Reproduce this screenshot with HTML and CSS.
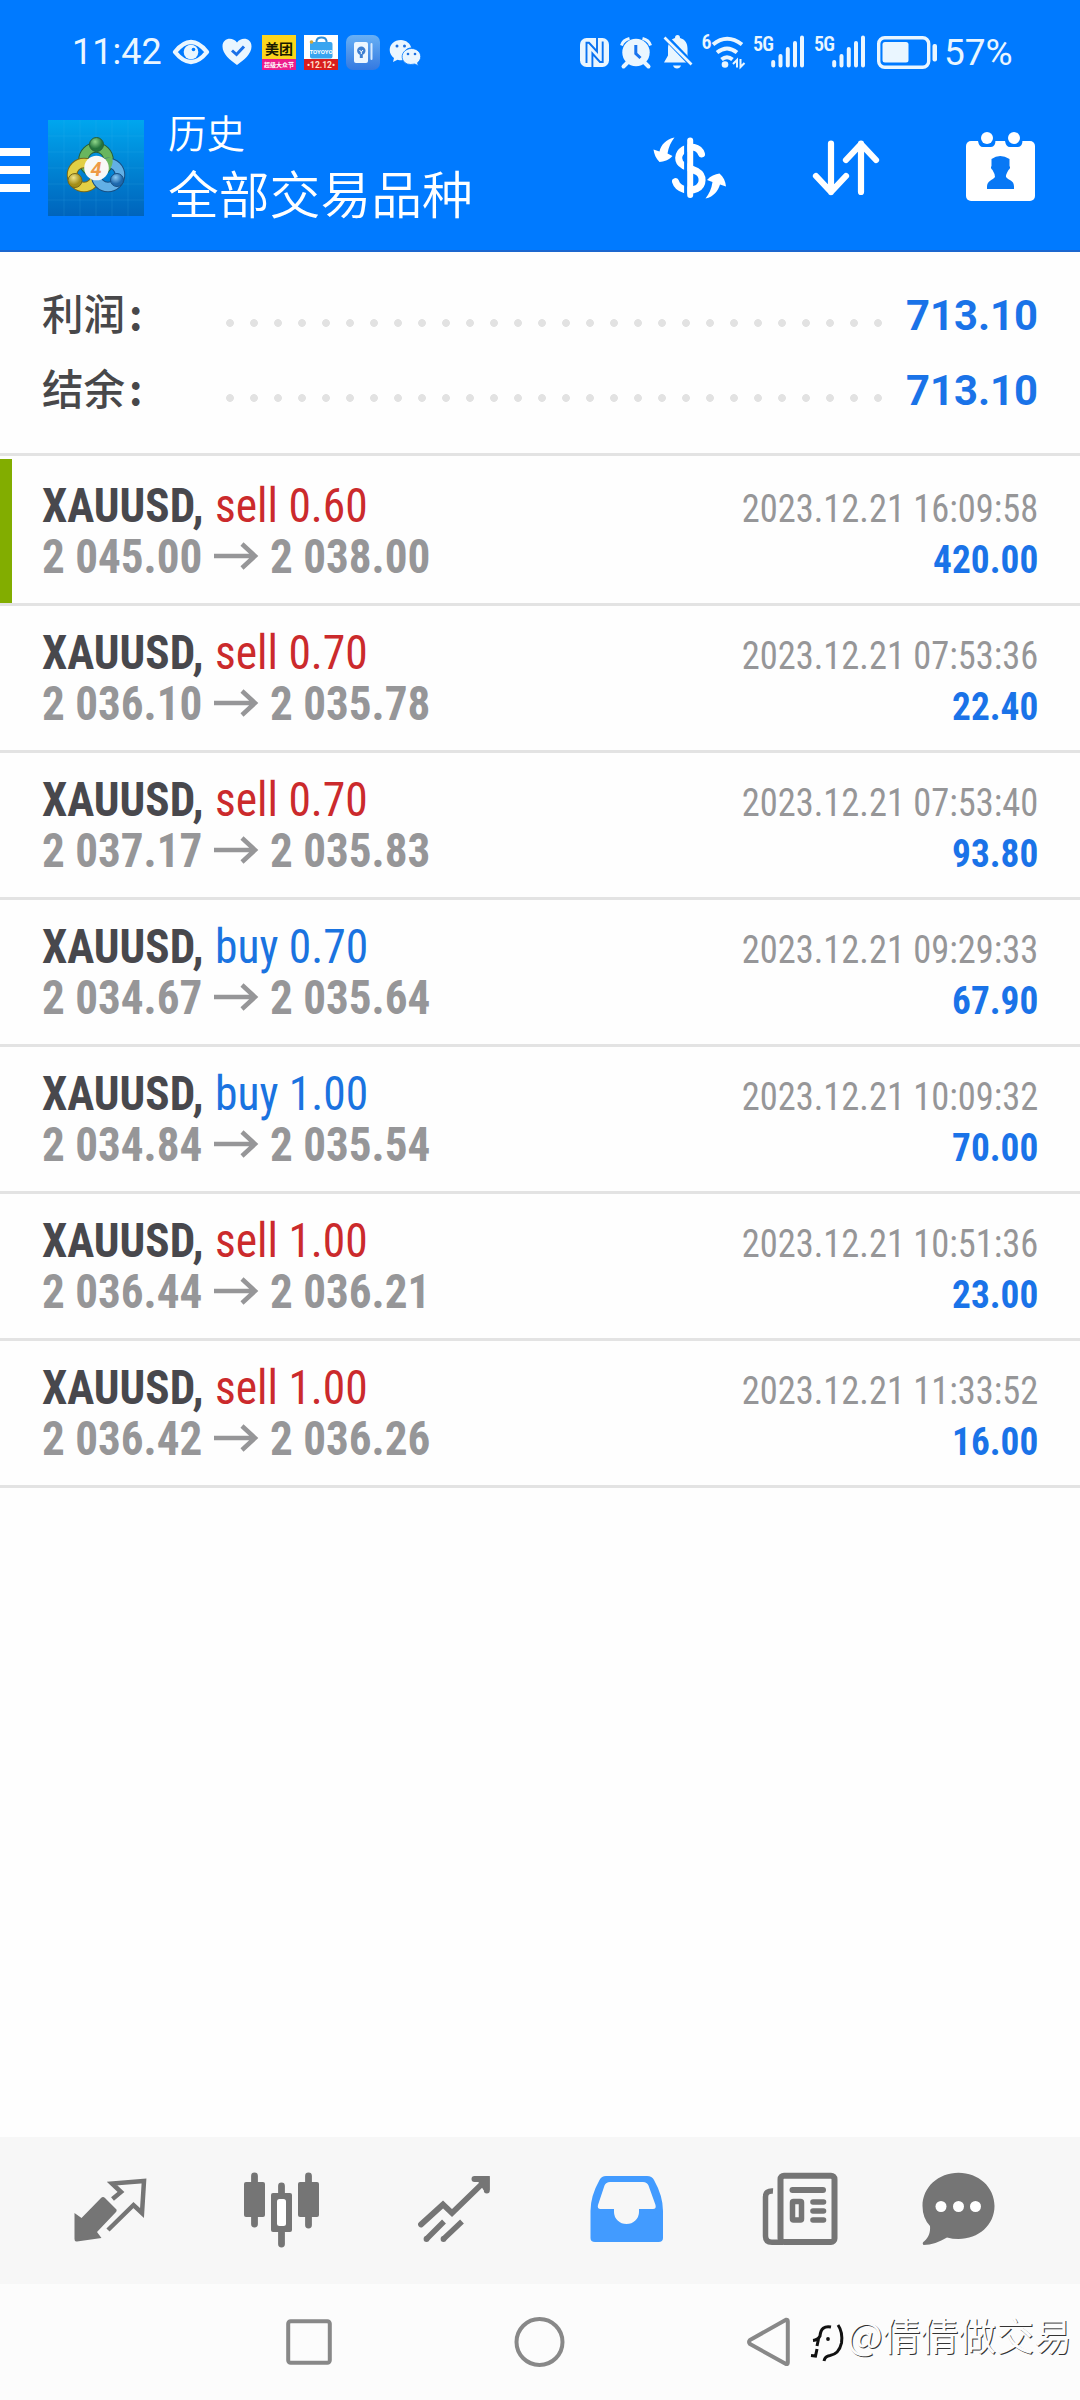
FILE: index.html
```html
<!DOCTYPE html>
<html lang="zh-CN">
<head>
<meta charset="utf-8">
<title>历史</title>
<link rel="stylesheet" href="styles.css">
</head>
<body>
<div class="screen">
  <header class="header">
    <div class="status">
      <span class="clock">11:42</span>
      <svg class="s-eye" width="38" height="28" viewBox="172 38 38 28"><path d="M175 52Q191 32 207 52Q191 72 175 52Z" fill="none" stroke="#eaf6ff" stroke-width="4.4" stroke-linejoin="round"/><circle cx="191" cy="52" r="7.3" fill="#eaf6ff"/><circle cx="193.5" cy="49.5" r="1.8" fill="#007aff"/></svg>
      <svg class="s-heart" width="30" height="28" viewBox="222 38 30 28"><path d="M237 65C230 60 222.500 54 222.500 46.500C222.500 38 232.500 36.500 237 42.500C241.500 36.500 251.500 38 251.500 46.500C251.500 54 244 60 237 65Z" fill="#eaf6ff"/><path d="M232 50.500L236.500 54.500L244 46.500" fill="none" stroke="#1a70e8" stroke-width="3"/></svg>
      <svg class="s-app1" width="34" height="35" viewBox="0 0 34 35"><rect width="34" height="35" fill="#fbd51d"/><rect y="24" width="34" height="11" fill="#ec1c8c"/><text class="mt" x="17" y="19">美团</text><text class="mt-sub" x="17" y="32">超级大众节</text></svg>
      <svg class="s-app2" width="34" height="35" viewBox="0 0 34 35"><rect width="34" height="35" fill="#fff"/><rect y="24" width="34" height="11" fill="#d81e1e"/><path d="M12.500 8V6Q13 2.500 17.500 2.500Q22 2.500 22.500 6V8" fill="none" stroke="#2f8fd8" stroke-width="2"/><rect x="6" y="7" width="22.500" height="16.500" rx="2" fill="#39a5f0"/><circle cx="7.500" cy="7" r="1.800" fill="#d3a53a"/><text class="toy" x="17" y="18.500">TOYOYO</text><text class="sale" x="17" y="32.500">•12.12•</text></svg>
      <svg class="s-app3" width="34" height="35" viewBox="0 0 34 35"><defs><linearGradient id="g3" x1="0" y1="0" x2="0" y2="1"><stop offset="0" stop-color="#68b0f5"/><stop offset="1" stop-color="#3479e0"/></linearGradient></defs><rect width="34" height="35" rx="7" fill="url(#g3)"/><rect x="8" y="7" width="14" height="21" rx="2" fill="#eef7ff"/><rect x="24.500" y="8" width="2" height="17" rx="1" fill="#d6eaff"/><circle cx="15.300" cy="15.800" r="4.200" fill="#3f7fd0"/><path d="M13.500 15L15.300 17L17 15M15.300 17V19" stroke="#fff" fill="none"/><path d="M13.800 19.500H16.800V23H13.800Z" fill="#3f7fd0"/></svg>
      <svg class="s-wechat" width="32" height="27" viewBox="389 38 32 27"><path d="M401 39C394 39 389.700 43.500 389.700 49C389.700 52.500 391.500 55 394 57L393 61L397.500 58.700Q402 60 405 58.500C400 49 412 44 411.500 47.500C410.500 42.500 406 39 401 39Z" fill="#eaf6ff"/><circle cx="397" cy="45" r="1.500" fill="#1c6fe0"/><circle cx="404.500" cy="45" r="1.500" fill="#1c6fe0"/><path d="M411.500 47.500C416.800 47.500 420.700 51.200 420.700 55.500C420.700 58.300 419.300 60.300 417.500 61.700L418.300 64.700L414.800 63Q406 65 402.800 59C400.300 53 405 47.500 411.500 47.500Z" fill="#eaf6ff" stroke="#007aff" stroke-width=".8"/><circle cx="408" cy="53" r="1.300" fill="#1c6fe0"/><circle cx="415" cy="53" r="1.300" fill="#1c6fe0"/></svg>
      <svg class="s-nfc" width="29" height="29" viewBox="580 37.500 29 29"><rect x="580" y="37.500" width="29" height="29" rx="6.500" fill="#eaf6ff"/><path d="M592.400 66.500V53L600 61.500H602.700V41M597 37.500V51L589 42.300H586.500V62.500" fill="none" stroke="#0a72f0" stroke-width="1.900"/></svg>
      <svg class="s-alarm" width="32" height="31" viewBox="620 36 32 31"><circle cx="636" cy="51.500" r="13.700" fill="#eaf6ff"/><path d="M628 61L623.500 65.500M644 61L648.500 65.500" stroke="#eaf6ff" stroke-width="4" stroke-linecap="round"/><path d="M621.500 44.500Q623 39 629.500 37.500M642.500 37.500Q649 39 650.500 44.500" fill="none" stroke="#eaf6ff" stroke-width="3"/><path d="M635.800 44V52.500L640.500 57" fill="none" stroke="#1873ee" stroke-width="3"/></svg>
      <svg class="s-bell" width="30" height="34" viewBox="663 35.500 30 34"><path d="M677.500 35.500Q680 35.500 680 38.500C685.500 40 687.500 44 687.500 49V56L691.500 63H664L668 56V49C668 44 670 40 675 38.500Q675 35.500 677.500 35.500Z" fill="#eaf6ff"/><path d="M673 66H681Q680 69 677 69Q674 69 673 66Z" fill="#eaf6ff"/><path d="M665 37L692 65" stroke="#007aff" stroke-width="6"/><path d="M664.500 38L691.500 65" stroke="#eaf6ff" stroke-width="2.600"/></svg>
      <svg class="s-wifi" width="44" height="34" viewBox="702 35.500 44 34"><text class="tag" x="701.500" y="49.500">6</text><path d="M713 45Q727 33.500 742 45M717 53Q727 45 737 53M721.500 60Q727 55.500 732.500 60" fill="none" stroke="#eaf6ff" stroke-width="4"/><circle cx="725" cy="65" r="3.300" fill="#eaf6ff"/><path d="M733 64.500L737 60.500V68M740.500 59.500V67.500L744.500 63.500" fill="none" stroke="#eaf6ff" stroke-width="2"/></svg>
      <svg class="s-sig1" width="51" height="34" viewBox="753 35.500 51 34"><text class="tag" x="753" y="51">5G</text><path d="M773.200 62.500V66M780.500 56.500V66M787.800 49.500V66M795 43.500V66M802 38V66" stroke="#eaf6ff" stroke-width="4" stroke-linecap="round"/></svg>
      <svg class="s-sig2" width="52" height="34" viewBox="753 35.500 52 34"><text class="tag" x="753" y="51">5G</text><path d="M773.200 62.500V66M780.500 56.500V66M787.800 49.500V66M795 43.500V66M802 38V66" stroke="#eaf6ff" stroke-width="4" stroke-linecap="round"/></svg>
      <svg class="s-batt" width="60" height="33" viewBox="877 36 60 33"><rect x="878.700" y="37.700" width="50" height="29.600" rx="6" fill="none" stroke="#eaf6ff" stroke-width="3.400"/><rect x="882.500" y="42" width="26" height="20.500" rx="2.500" fill="#eaf6ff"/><rect x="932.500" y="44" width="4.500" height="17.500" rx="2" fill="#eaf6ff"/></svg>
      <span class="pct">57%</span>
    </div>
    <div class="appbar">
      <svg class="menu" width="30" height="44" viewBox="0 0 30 44"><path d="M0 4H30M0 22H30M0 40H30" stroke="#fff" stroke-width="8"/></svg>
      <svg class="logo" width="96" height="96" viewBox="0 0 96 96">
        <defs>
          <linearGradient id="bg" x1="0" y1="0" x2="0" y2="1"><stop offset="0" stop-color="#00a6ee"/><stop offset=".5" stop-color="#0084d4"/><stop offset="1" stop-color="#0064bc"/></linearGradient>
          <radialGradient id="gg" cx=".4" cy=".3"><stop offset="0" stop-color="#8fd78a"/><stop offset="1" stop-color="#23743c"/></radialGradient>
          <radialGradient id="gy" cx=".4" cy=".3"><stop offset="0" stop-color="#efe48a"/><stop offset="1" stop-color="#a38d17"/></radialGradient>
          <radialGradient id="gb" cx=".4" cy=".3"><stop offset="0" stop-color="#8cc9f3"/><stop offset="1" stop-color="#1d68ad"/></radialGradient>
        </defs>
        <rect width="96" height="96" fill="url(#bg)"/>
        <path d="M16 0V96M32 0V96M48 0V96M64 0V96M80 0V96M0 16H96M0 32H96M0 48H96M0 64H96M0 80H96" stroke="#4dc0f5" stroke-opacity=".15"/>
        <g fill="none"><circle cx="48" cy="40" r="12.500" stroke="#275e38" stroke-width="10.500"/><circle cx="48" cy="40" r="12.500" stroke="#69b65e" stroke-width="8.500"/><circle cx="36" cy="55" r="12" stroke="#776818" stroke-width="10.500"/><circle cx="36" cy="55" r="12" stroke="#e2cf45" stroke-width="8.500"/><circle cx="60" cy="55" r="12" stroke="#174f84" stroke-width="10.500"/><circle cx="60" cy="55" r="12" stroke="#62b0e6" stroke-width="8.500"/><path d="M60.500 38A13 13 0 0 1 57 49" stroke="#69b65e" stroke-width="8"/></g>
        <circle cx="48.500" cy="24.500" r="7" fill="url(#gg)" stroke="#275e38"/><circle cx="27" cy="60.500" r="7" fill="url(#gy)" stroke="#776818"/><circle cx="69" cy="60" r="6.500" fill="url(#gb)" stroke="#174f84"/>
        <circle cx="48.500" cy="48" r="12.300" fill="#f8f8f6"/><text class="four" x="48" y="55.500">4</text>
      </svg>
      <div class="titles"><div class="sub">历史</div><div class="main">全部交易品种</div></div>
      <svg class="a-usd" width="73" height="62" viewBox="653 137 73 62"><path d="M701.500 154C699 146.500 690 145.500 684 149.500C677 154 677 162 683.500 165.500L697 171.500C704 175.500 703.500 185 697 188.500C690 192 678 190 675.500 181.500" fill="none" stroke="#fff" stroke-width="7" stroke-linecap="round"/><path d="M685.800 136V200" stroke="#007aff" stroke-width="3.400"/><path d="M690.200 140.500V195" stroke="#fff" stroke-width="6" stroke-linecap="round"/><path d="M674.500 137.500C666 139 661 145 659.500 151.500L653.500 149.500C654 154 656 158.500 659.500 162C664 161.500 668.500 160.500 672.500 156L667.500 153.500C668.500 147 671 142 674.500 137.500Z" fill="#fff"/><path d="M705.500 198.500C714 197 718.500 190 720 184.500L726 186.500C725.500 181 723.500 177 719.500 173.500C715 174 710.500 176 707 180L712.500 182C711.500 189 709 194 705.500 198.500Z" fill="#fff"/></svg>
      <svg class="a-sort" width="67" height="56" viewBox="813 140 67 56"><path d="M831 143.500V192M816 176L831 192L846 176M861 192V143.500M846 160L861 144L876 160" fill="none" stroke="#fff" stroke-width="6.200" stroke-linecap="round" stroke-linejoin="round"/></svg>
      <svg class="a-cal" width="69" height="69" viewBox="966 132 69 69"><rect x="966" y="141" width="69" height="60" rx="5" fill="#fff"/><path d="M978 140V141Q979 147 983 147H991Q995.500 147 995.500 140ZM1005 140V141Q1006 147 1010 147H1018Q1022.500 147 1022.500 140Z" fill="#007aff"/><circle cx="987" cy="138" r="6" fill="#fff"/><circle cx="1014" cy="138" r="6" fill="#fff"/><path d="M991.500 159Q1000 153 1009.500 159V166Q1011 168 1008.500 170Q1005.500 175 1006 177C1009 181 1014 180 1014 186.500V189H987V186.500C987 181 993 180 995 177Q995 174 992.500 170Q990 168 991.500 166Z" fill="#0878f5"/></svg>
    </div>
  </header>

  <section class="summary">
    <div class="sum-row"><span class="label">利润<span class="colon">:</span></span><span class="dots"></span><span class="total">713.10</span></div>
    <div class="sum-row"><span class="label">结余<span class="colon">:</span></span><span class="dots"></span><span class="total">713.10</span></div>
  </section>

  <main class="deals">
    <article class="deal marked">
      <div class="line"><b class="sym">XAUUSD,</b><span class="side sell">sell 0.60</span><time>2023.12.21 16:09:58</time></div>
      <div class="line"><span class="price">2 045.00</span><svg class="arrow" width="44" height="28" viewBox="0 0 44 28"><path d="M0 14H41M28 2L41 14L28 26"/></svg><span class="price">2 038.00</span><span class="profit">420.00</span></div>
    </article>
    <article class="deal">
      <div class="line"><b class="sym">XAUUSD,</b><span class="side sell">sell 0.70</span><time>2023.12.21 07:53:36</time></div>
      <div class="line"><span class="price">2 036.10</span><svg class="arrow" width="44" height="28" viewBox="0 0 44 28"><path d="M0 14H41M28 2L41 14L28 26"/></svg><span class="price">2 035.78</span><span class="profit">22.40</span></div>
    </article>
    <article class="deal">
      <div class="line"><b class="sym">XAUUSD,</b><span class="side sell">sell 0.70</span><time>2023.12.21 07:53:40</time></div>
      <div class="line"><span class="price">2 037.17</span><svg class="arrow" width="44" height="28" viewBox="0 0 44 28"><path d="M0 14H41M28 2L41 14L28 26"/></svg><span class="price">2 035.83</span><span class="profit">93.80</span></div>
    </article>
    <article class="deal">
      <div class="line"><b class="sym">XAUUSD,</b><span class="side buy">buy 0.70</span><time>2023.12.21 09:29:33</time></div>
      <div class="line"><span class="price">2 034.67</span><svg class="arrow" width="44" height="28" viewBox="0 0 44 28"><path d="M0 14H41M28 2L41 14L28 26"/></svg><span class="price">2 035.64</span><span class="profit">67.90</span></div>
    </article>
    <article class="deal">
      <div class="line"><b class="sym">XAUUSD,</b><span class="side buy">buy 1.00</span><time>2023.12.21 10:09:32</time></div>
      <div class="line"><span class="price">2 034.84</span><svg class="arrow" width="44" height="28" viewBox="0 0 44 28"><path d="M0 14H41M28 2L41 14L28 26"/></svg><span class="price">2 035.54</span><span class="profit">70.00</span></div>
    </article>
    <article class="deal">
      <div class="line"><b class="sym">XAUUSD,</b><span class="side sell">sell 1.00</span><time>2023.12.21 10:51:36</time></div>
      <div class="line"><span class="price">2 036.44</span><svg class="arrow" width="44" height="28" viewBox="0 0 44 28"><path d="M0 14H41M28 2L41 14L28 26"/></svg><span class="price">2 036.21</span><span class="profit">23.00</span></div>
    </article>
    <article class="deal">
      <div class="line"><b class="sym">XAUUSD,</b><span class="side sell">sell 1.00</span><time>2023.12.21 11:33:52</time></div>
      <div class="line"><span class="price">2 036.42</span><svg class="arrow" width="44" height="28" viewBox="0 0 44 28"><path d="M0 14H41M28 2L41 14L28 26"/></svg><span class="price">2 036.26</span><span class="profit">16.00</span></div>
    </article>
  </main>

  <nav class="tabs">
    <svg width="73" height="76" viewBox="74 2172 73 76"><path d="M74.500 2213L81.500 2218L101 2198Q103 2196 105 2198L116.500 2209.500Q117 2211 116 2212L97 2232L101.500 2238L77 2241.500Q74.500 2242 74.500 2239Z" fill="#757575"/><path d="M112.500 2199L121 2192L112 2183.500L144 2181L142 2213L133.500 2205L108 2230" fill="none" stroke="#757575" stroke-width="4.500"/></svg>
    <svg width="76" height="76" viewBox="244 2172 76 76"><path d="M254.500 2176V2224M308.500 2176V2225M281.500 2186V2244" stroke="#757575" stroke-width="6.800" stroke-linecap="round"/><rect x="244" y="2182" width="21" height="35" rx="2" fill="#757575"/><rect x="298" y="2182" width="21" height="35" rx="2" fill="#757575"/><rect x="271" y="2193" width="21" height="39" rx="2" fill="#757575"/><rect x="277" y="2199" width="9" height="27" rx="2.500" fill="#fff"/></svg>
    <svg width="72" height="76" viewBox="417.500 2172 72 76"><path d="M420.500 2224.500L442.500 2204.500L451.500 2213L484.500 2181" fill="none" stroke="#757575" stroke-width="5.800" stroke-linecap="round"/><path d="M474 2179H486.300V2190.500" fill="none" stroke="#757575" stroke-width="6" stroke-linecap="round"/><path d="M474 2176H487Q489 2176 489 2178V2190H483Z" fill="#757575"/><path d="M426 2239L443.500 2221.500M443 2239L461.500 2221.500" stroke="#757575" stroke-width="5.500"/><circle cx="426" cy="2239" r="2.900" fill="#757575"/><circle cx="443" cy="2239" r="2.900" fill="#757575"/></svg>
    <svg width="73" height="76" viewBox="590 2172 73 76"><path fill-rule="evenodd" d="M606 2176H647Q652 2176 654 2180Q663 2196 663 2211V2238Q663 2242 658.500 2242H595Q590.500 2242 590.500 2238V2211Q590.500 2196 599.500 2180Q601.500 2176 606 2176ZM610 2182Q606 2182 604.500 2185.500L598 2205Q597 2209 600.500 2209H614V2212A12.500 12 0 0 0 639 2212V2209H653Q656.500 2209 655.500 2205L648.500 2185.500Q647 2182 643 2182Z" fill="#429bff"/></svg>
    <svg width="75" height="76" viewBox="763 2172 75 76"><rect x="780.500" y="2175.700" width="54" height="66.300" rx="3.500" fill="none" stroke="#757575" stroke-width="6"/><path d="M773 2191Q765.500 2190.500 765.500 2197V2236Q765.500 2242.300 772 2242.300H783" fill="none" stroke="#757575" stroke-width="5.500"/><path d="M792.500 2190H823" stroke="#757575" stroke-width="6" stroke-linecap="round"/><rect x="792.500" y="2201.500" width="9" height="18.500" rx="1" fill="none" stroke="#757575" stroke-width="5.500"/><path d="M813 2202H823.500M813 2211H823.500M813 2220H823.500" stroke="#757575" stroke-width="5.600" stroke-linecap="round"/></svg>
    <svg width="73" height="76" viewBox="921.500 2172 73 76"><path d="M958 2172.700C978 2172.700 994 2187 994 2206C994 2225 978 2239 958 2239Q952 2239 946.500 2237.500C939 2242 931 2245 923 2245Q921 2243 924 2241C928.500 2237 930 2232 929.500 2226Q922 2218 922 2206C922 2187 938 2172.700 958 2172.700Z" fill="#757575"/><g fill="#fff"><circle cx="940.500" cy="2206.500" r="5.500"/><circle cx="958" cy="2206.500" r="5.500"/><circle cx="975" cy="2206.500" r="5.500"/></g></svg>
  </nav>

  <footer class="sysnav">
    <svg width="46" height="50" viewBox="0 0 46 50"><rect x="2.200" y="4.200" width="41.600" height="41.600" rx="2.500" fill="none" stroke="#888" stroke-width="4"/></svg>
    <svg width="51" height="50" viewBox="0 0 51 50"><circle cx="25.500" cy="25" r="23" fill="none" stroke="#888" stroke-width="4"/></svg>
    <svg width="43" height="50" viewBox="0 0 43 50"><path d="M39 2.800Q40.800 2.500 40.800 4.500V45.500Q40.800 47.500 39 47L3 27Q1 25 3 23Z" fill="none" stroke="#888" stroke-width="4" stroke-linejoin="round"/></svg>
    <div class="mark">
      <svg width="38" height="46" viewBox="806 2318 38 46"><path d="M831 2328Q821 2326 820 2337Q818 2341 813 2341.500M818.500 2340L817 2347M817 2350L815.500 2357L811 2356.500M838 2326Q843 2333 841.500 2344Q839 2355 830 2356.500Q825 2357 824 2362" fill="none" stroke="#111" stroke-width="3"/><circle cx="828" cy="2340" r="1.900" fill="#111"/></svg>
      <span class="handle">@倩倩做交易</span>
    </div>
  </footer>
</div>
</body>
</html>
```
FILE: styles.css
```css
* { box-sizing: border-box; }
body {
  margin: 0;
  background: #fefefe;
  font-family: Roboto, "Noto Sans CJK SC", sans-serif;
}
svg { display: block; flex: none; overflow: visible; }
.screen {
  width: 1080px;
  height: 2400px;
  display: flex;
  flex-direction: column;
  overflow: hidden;
}

/* Header */
.header {
  height: 252px;
  background: #007aff;
  border-bottom: 2px solid #1c67cf;
  color: #fff;
}
.status {
  display: flex;
  align-items: center;
  height: 104px;
  padding-left: 72px;
  color: #eaf6ff;
}
.clock { width: 100px; font-size: 36px; }
.s-heart { margin-left: 12px; }
.s-app1 { margin-left: 10px; }
.s-app2, .s-app3 { margin-left: 8px; }
.s-wechat { margin-left: 9px; }
.s-nfc { margin-left: 159px; }
.s-alarm, .s-bell { margin-left: 11px; }
.s-wifi { margin-left: 9px; }
.s-sig1 { margin-left: 7px; }
.s-sig2 { margin-left: 10px; }
.s-batt { margin-left: 11px; }
.pct { margin-left: 7px; font-size: 37px; }
.tag { font-size: 20px; font-weight: 600; font-stretch: 75%; letter-spacing: -0.8px; fill: #eaf6ff; }
.mt { font: 700 14px "Noto Sans CJK SC", sans-serif; text-anchor: middle; fill: #1a1a00; }
.mt-sub { font: 700 6px "Noto Sans CJK SC", sans-serif; text-anchor: middle; fill: #fff; }
.toy { font-size: 6px; font-weight: 700; text-anchor: middle; fill: #fff; }
.sale { font-size: 8.5px; font-weight: 700; text-anchor: middle; fill: #ffe3cf; }
.four { font: italic 700 20px Roboto, sans-serif; text-anchor: middle; fill: #ee9a45; }

.appbar { display: flex; height: 146px; padding-top: 16px; }
.menu { margin-top: 28px; }
.logo { margin-left: 18px; }
.titles {
  width: 509px;
  padding-left: 24px;
  font-family: "Noto Sans CJK SC", sans-serif;
  font-weight: 350;
  white-space: nowrap;
}
.sub { margin-top: -13px; font-size: 38.5px; line-height: 48px; }
.main { margin-top: 1px; font-size: 50.8px; line-height: 72px; }
.a-usd { margin-top: 17px; }
.a-sort { margin: 20px 0 0 87px; }
.a-cal { margin: 12px 0 0 86px; }

/* Totals */
.summary {
  height: 204px;
  padding: 26px 42px 0;
  border-bottom: 3px solid #e3e3e3;
}
.sum-row { display: flex; align-items: center; height: 75px; }
.label {
  width: 181px;
  padding-bottom: 8px;
  font-family: "Noto Sans CJK SC", sans-serif;
  font-size: 41.5px;
  font-weight: 500;
  color: #48484a;
}
.colon { margin-left: 4px; font-weight: 700; }
.dots {
  width: 672px;
  height: 24px;
  margin-top: 14px;
  background: radial-gradient(circle, #e2e2e2 3.5px, transparent 4.3px) -5px 0 / 24px 24px;
}
.total {
  flex: 1;
  text-align: right;
  font-size: 41.8px;
  font-weight: 700;
  color: #1a73e8;
}

/* Deals */
.deals { flex: 1; padding-top: 3px; font-stretch: 75%; }
.deal {
  height: 147px;
  padding: 21px 42px 0;
  border-bottom: 3px solid #e3e3e3;
}
.marked {
  background: linear-gradient(#82ad00, #82ad00) 0 0 / 12px 144px no-repeat;
}
.line {
  display: flex;
  align-items: baseline;
  height: 51px;
  line-height: 51px;
  font-size: 48px;
  white-space: nowrap;
}
.sym, .side, .price { transform: scaleX(0.94); transform-origin: left; }
.side { transform: scaleX(0.948); }
.sym { width: 173px; color: #48484d; }
.sell { color: #cb2a2c; }
.buy { color: #1a73e0; }
.price { width: 172px; font-weight: 700; color: #969698; }
.arrow { margin-right: 12px; transform: translateY(-3px); }
.arrow path { fill: none; stroke: #969698; stroke-width: 4.5px; }
time, .profit {
  margin-left: auto;
  font-size: 39.5px;
  transform-origin: right;
}
time { color: #969698; transform: scaleX(0.923); }
.profit { font-weight: 700; color: #1a73e8; transform: scaleX(0.945); }

/* Bottom tabs */
.tabs {
  display: grid;
  grid-template-columns: 170px 173.5px 172.5px 173px 158.5px 73px;
  align-items: start;
  height: 147px;
  padding: 35px 0 0 74px;
  background: #f7f7f7;
}

/* System navigation */
.sysnav {
  display: grid;
  grid-template-columns: 228px 233px 59px 274px;
  height: 116px;
  padding: 33px 0 0 286px;
  background: #fcfcfc;
}
.mark { display: flex; }
.handle {
  margin: -6px 0 0 3px;
  font: 400 37.8px/46px "Noto Sans CJK SC", sans-serif;
  color: #fcfcfc;
  text-shadow: 1px 1px 0 #333;
  white-space: nowrap;
}
```
